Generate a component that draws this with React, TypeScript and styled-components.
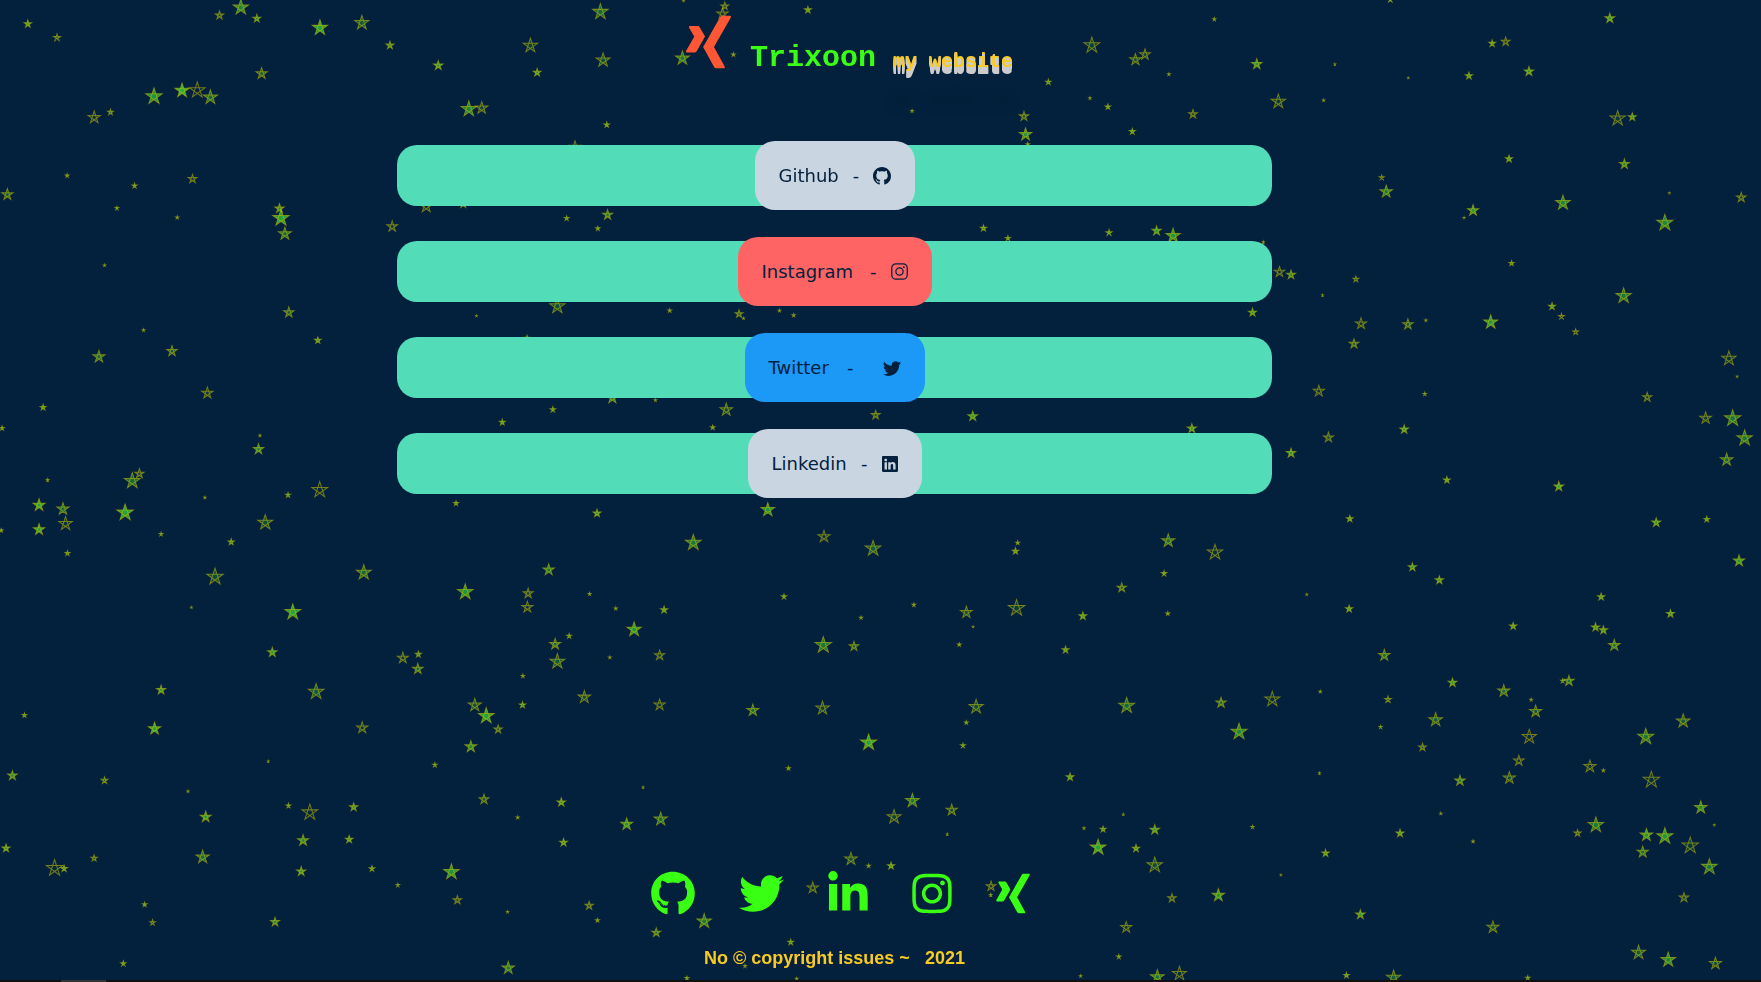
import React from "react";
import styled, { createGlobalStyle } from "styled-components";
import { BsGithub, BsTwitter, BsLinkedin } from "react-icons/bs";
import { FaGithub, FaTwitter, FaLinkedinIn, FaInstagram, FaXing } from "react-icons/fa";

const navy = "#03213d";
const neon = "#39ff14";
const gold = "#f9ca24";

const GlobalStyle = createGlobalStyle`
  *, *::before, *::after { box-sizing: border-box; }
  body { margin: 0; background: ${navy}; }
`;

const Sky = styled.svg`
  position: fixed;
  inset: 0;
  width: 100%;
  height: 100%;
  z-index: -1;
`;

const Star = styled.path`
  fill: #3cff3c;
  stroke: #c8be00;
  stroke-opacity: 0.58;
  stroke-width: 0.9;
`;

const Page = styled.div`
  min-height: 100vh;
  display: flex;
  flex-direction: column;
  align-items: center;
  padding: 12px 92px 14px 0;
`;

const Header = styled.header`
  display: flex;
  align-items: flex-end;
  height: 64px;
  padding-left: 30px;
`;

const Logo = styled(FaXing)`
  width: 45px;
  height: 60px;
  color: #ff5733;
  align-self: flex-start;
  margin-right: 19px;
`;

const Title = styled.h1`
  margin: 0 17px 0 0;
  font: bold 30px/36px "Liberation Mono", monospace;
  color: ${neon};
`;

const Subtitle = styled.span`
  font: bold 20px/28px "Liberation Mono", monospace;
  color: ${gold};
  text-shadow: 0 1px 0 #ccc, 0 2px 0 #ccc, 0 3px 0 #ccc, 0 4px 0 #ccc,
    0 5px 0 #ccc, 0 6px 0 #ccc, 0 7px 0 #ccc,
    0 40px 12px rgba(0, 0, 20, 0.15);
`;

const LinkList = styled.ul`
  list-style: none;
  width: 100%;
  max-width: 875px;
  margin: 69px 0 40px;
  padding: 0;
  display: flex;
  flex-direction: column;
  gap: 35px;
`;

const Bar = styled.li`
  height: 61px;
  display: flex;
  justify-content: center;
  align-items: center;
  background: #52dcb8;
  border-radius: 20px;
`;

const Pill = styled.a<{ $tone: string; $width: number }>`
  flex: none;
  display: flex;
  align-items: center;
  gap: 14px;
  width: ${(p) => p.$width}px;
  height: 69px;
  padding: 0 24px;
  border-radius: 20px;
  background: ${(p) => p.$tone};
  color: ${navy};
  font: 18px/21px "DejaVu Sans", sans-serif;
  text-decoration: none;
`;

const PillName = styled.span`
  flex: 1;
`;

const PillIcon = styled.span<{ $indent: number }>`
  display: flex;
  margin-left: ${(p) => p.$indent}px;
`;

const Footer = styled.footer`
  margin-top: auto;
  display: flex;
  flex-direction: column;
  align-items: center;
  gap: 32px;
`;

const Socials = styled.nav`
  display: flex;
  gap: 44px;
  padding-left: 12px;
`;

const Social = styled.a<{ $width: number }>`
  display: flex;
  color: ${neon};

  svg {
    width: ${(p) => p.$width}px;
    height: 45px;
  }
`;

const Copyright = styled.p`
  margin: 0;
  font: bold 18px/20px "Liberation Sans", sans-serif;
  color: ${gold};
  white-space: pre;
`;

const Strip = styled.div`
  position: fixed;
  inset: auto 0 0 0;
  height: 2px;
  background: #111;
  padding-left: 61px;
`;

const StripThumb = styled.div`
  width: 45px;
  height: 2px;
  background: #333;
`;

/* x, y, radius and how strongly the star is filled */
type StarSpec = [number, number, number, number?];

const stars: StarSpec[] = [
  [24.7, 21.2, 3.8, 0.8], [50.7, 33.4, 3.6, 0.3], [195.3, 13.6, 4.2, 0.2], [214.3, 6.5, 7.5, 0.7],
  [228.5, 16.4, 4, 0.7], [284.7, 24.7, 7.5, 0.9], [322, 20.3, 7, 0.4], [347, 40.2, 4, 0.7],
  [390, 58.2, 4.7, 0.8], [472, 40.5, 7, 0.2], [478, 64.5, 4, 0.8], [232.8, 65.4, 5.6, 0.4],
  [137, 85.8, 8, 0.8], [162, 80.5, 7, 1], [175.5, 80.2, 7.6, 0], [187.2, 86.5, 7, 0.5],
  [83.8, 104.4, 6, 0.1], [98.3, 99.8, 3, 0.6], [417.2, 97, 7.5, 0.7], [428.7, 96, 6, 0.2],
  [511.7, 131, 6, 0.1], [59.7, 156.2, 2], [119.7, 165.3, 2.6], [171.3, 159.2, 4.4, 0.1],
  [6.5, 173, 5.6, 0.4], [104, 185.2, 2], [157.7, 193.5, 1.7], [248.7, 185.5, 4.7, 0.7],
  [250, 194, 8, 0.9], [253.5, 208, 6.3, 0.5], [379.3, 183.5, 6.3, 0.1], [412.3, 181.5, 4],
  [349, 201.5, 5.3, 0.1], [504.3, 194.2, 2.5], [93, 236, 1.3], [127.7, 293.7, 1.5],
  [257, 278, 5.2, 0.4], [282.8, 302.8, 3.4], [88, 317.5, 6, 0.5], [153, 312.5, 5.2, 0.4],
  [184.5, 349.7, 5.6, 0.15], [496, 272.5, 7.4, 0.3], [424, 281, 0.7], [469, 301, 3],
  [38.3, 362.5, 3.1], [1.8, 381, 2.4], [492, 364.5, 2.9], [447, 375.8, 3.1],
  [231.3, 387.5, 1.2], [230, 399.7, 5.2, 0.7], [42.3, 427, 1.5], [117.7, 428, 7.7, 0.5],
  [124, 421.5, 4.7, 0.2], [34.7, 449.5, 6, 0.9], [56, 453, 6, 0.5], [58.3, 466, 6.6, 0.1],
  [34.7, 471.2, 5.6, 0.9], [111.3, 456.2, 8, 0.9], [60, 492.3, 2.6], [1, 472, 2],
  [143.3, 475.3, 2], [182.3, 442.7, 1.3], [256.3, 440.5, 2.6], [284.5, 436, 7.7, 0.05],
  [236, 465, 7.3, 0.3], [205.7, 482.3, 3.2], [191.3, 513.3, 8, 0.3], [170.3, 540.5, 1],
  [323.7, 509.5, 7.3, 0.5], [260.5, 544.7, 7.7, 0.9], [414, 526.9, 7.6, 0.8], [405.8, 447.9, 2.6],
  [488.3, 507, 5.6, 0.6], [470, 528, 5, 0.2], [469.3, 540.4, 5.5, 0.1], [242.3, 580.5, 4.7, 0.8],
  [143.3, 614, 4.6, 0.8], [281.3, 615.7, 7.6, 0.4], [21.7, 636.5, 2.4], [137.5, 648.5, 6.1, 0.9],
  [322.3, 647.7, 5.6, 0.1], [358.5, 585.5, 5.4, 0.15], [372.3, 582.3, 3.2, 0.7], [371.8, 595.3, 5.3, 0.5],
  [465.3, 601.5, 1.9], [465, 627.3, 3.3], [494, 573.3, 5.5, 0.5], [496, 588.7, 7.3, 0.4],
  [506.5, 566, 2.6], [422.5, 627.5, 6.4, 0.3], [432.7, 637.2, 7.7, 0.9], [443.3, 649, 4.2, 0.3],
  [419, 664.5, 5.8, 0.7], [387, 680.7, 2.4], [11, 690.2, 4.8, 0.7], [93, 694.5, 3.5, 0.4],
  [238.7, 677.3, 0.9], [167.3, 704.3, 1.2], [256.7, 717, 2.5], [275.7, 723, 7.7, 0.05],
  [314.7, 718.3, 4.2], [183, 727, 5.4, 0.8], [269.7, 748, 5.5, 0.7], [310.7, 747, 3.9],
  [180.3, 762.7, 6.5, 0.5], [268, 775.5, 4.6, 0.8], [331, 773, 3], [5.3, 754.9, 4.1],
  [48.5, 772.6, 8, 0.05], [57, 773, 3.5], [83.7, 763.7, 3.2, 0.3], [354, 787.7, 1.9],
  [401.7, 776, 7.6, 0.8], [407, 801, 4.3, 0.2], [430.7, 711.4, 4.9, 0.3], [460.7, 727.5, 1.6],
  [499.5, 714, 4.3, 0.8], [501.5, 749.7, 4], [128.7, 805, 2.4], [135.7, 821, 2.9, 0.3],
  [244.7, 820.5, 4.5, 0.7], [109.7, 857.5, 2.8], [451.7, 811.5, 1.2], [452.3, 861.4, 6.2, 0.6],
  [520, 620.4, 6.2, 0.3], [534.3, 10.5, 7.6, 0.5], [536.7, 53.5, 6.8, 0.3], [540, 111, 2.9],
  [540.7, 191.2, 5, 0.6], [532, 203.3, 2.3], [719, 8.8, 3.6], [608.3, 0.5, 1],
  [645, 5.4, 4, 0.2], [643, 12.2, 5.6, 0.1], [607.3, 51.7, 6.8, 0.6], [652.7, 48.5, 2],
  [811.7, 98.7, 1.6], [971.7, 40.3, 7.7, 0.2], [1010.5, 53, 5.7, 0.3], [1019, 48.5, 5.3, 0.2],
  [1040.3, 66, 1.6], [933, 73, 2.9], [970, 87.3, 1.4], [986, 95, 2.9],
  [911.3, 103.5, 4.7, 0.3], [912.7, 119.7, 6.2, 0.8], [914.7, 128.3, 2], [1007.7, 117, 3.2],
  [875.3, 203, 3.3], [897, 212, 2.7], [987, 207, 3.2], [1029.3, 205.4, 4.7],
  [1044, 209.7, 7, 0.8], [596, 276.3, 2], [657.7, 279.3, 4, 0.3], [661.7, 283.2, 1.2],
  [693.7, 276.3, 1.5], [706.3, 280.6, 1.8], [545, 354, 5.7, 0.6], [583.3, 356, 1.4],
  [646.3, 364.7, 6.2, 0.3], [634.3, 380.3, 2.4], [779.3, 369.3, 4.5, 0.3], [865.7, 370.4, 4.9, 0.8],
  [531.3, 456.7, 4], [683.3, 453.6, 6.7, 0.8], [617, 483, 7.7, 0.6], [733.3, 477.5, 5.9, 0.1],
  [777, 488.2, 7.6, 0.4], [905.7, 483, 2.1], [903.7, 490.5, 3.4], [1039.7, 481.3, 6.5, 0.5],
  [1036, 510.3, 2.9], [998.3, 523, 4.7, 0.4], [524.7, 528.5, 1.7], [548, 541.5, 1.7],
  [591, 542.7, 3.7], [564.3, 560.2, 7, 0.8], [697.7, 531, 2.8], [766.3, 549.7, 1.7],
  [813.3, 538.3, 2], [860, 545, 5.8, 0.3], [904.7, 541.2, 8, 0.2], [866, 557.7, 0.8],
  [963.7, 548.2, 4], [1039.3, 546, 2.1], [948.3, 578.3, 3.6], [732.7, 574.2, 8, 0.6],
  [760, 575.2, 4.8, 0.4], [853.7, 573.7, 2], [542.7, 585, 1.5], [587, 583.3, 5, 0.15],
  [587, 627.3, 5.5, 0.1], [670, 632.2, 5.9, 0.5], [732, 630.3, 6.6, 0.2], [868.7, 629, 7, 0.3],
  [860, 643, 2.1], [857, 663.5, 2.6], [773, 660.8, 7.9, 0.9], [1002.7, 628, 7.7, 0.5],
  [701.7, 683.7, 2.1], [952.3, 691.5, 4], [812, 712.5, 6.8, 0.6], [795.7, 727, 6.8, 0.2],
  [847, 721, 5.6, 0.3], [843, 742.3, 0.8], [572.3, 700.5, 0.8], [557.7, 733.5, 5.9, 0.8],
  [588, 729, 6.5, 0.5], [964.7, 737, 1.3], [981.7, 738, 3.1], [977.3, 754.2, 7.7, 0.9],
  [999.7, 724.7, 0.9], [1011, 755, 3.8], [1027.7, 738.4, 4.8], [1027.7, 770, 7.5, 0.3],
  [757.3, 764.5, 6.2, 0.3], [773, 770.6, 2], [793, 770.6, 3.7], [723.3, 790.2, 5.6, 0.1],
  [882, 788.7, 4.9, 0.1], [881.7, 796.3, 1.5], [626.7, 819.9, 7.1, 0.6], [584, 830, 4.5, 0.5],
  [531.7, 819, 2.1], [524.3, 806, 4.2, 0.3], [703.7, 838.5, 3], [663, 859.7, 1.7],
  [611.3, 870.5, 2.2], [709, 871, 1.4], [1002.3, 825.3, 5.5, 0.15], [995.7, 851.4, 2.4],
  [961.7, 868.6, 1.4], [1030, 869.4, 6.8, 0.6], [1043, 799.3, 4.3, 0.2], [1080.7, 17, 1.8],
  [1237.3, -0.5, 3], [1118.5, 57, 5.2, 0.8], [1137.7, 90.3, 7, 0.2], [1188, 57, 0.6],
  [1253.3, 69.3, 0.8], [1178, 89.2, 1.3], [1061.7, 101.5, 4.4, 0.2], [1328, 38.6, 3.5],
  [1340, 37, 4.4, 0.1], [1307.3, 67.5, 3.7], [1360.7, 63.5, 4.7, 0.8], [1432.7, 16.2, 4.9, 0.8],
  [1439.7, 105.4, 7.4, 0.15], [1452.7, 104, 4, 0.7], [1343, 141.3, 3.7], [1445.7, 146, 4.9, 0.7],
  [1485.7, 171.7, 0.7], [1229.7, 158, 2.6, 0.3], [1233.7, 170.5, 6.2, 0.6], [1311, 187.2, 5.5, 0.8],
  [1303, 193.7, 1.1], [1391, 180.5, 7.2, 0.7], [1481.7, 198.3, 7.9, 0.7], [1549.7, 175.7, 4.8, 0.2],
  [1124.3, 215.3, 1.2], [1138.7, 242, 5.2, 0.1], [1149, 244.5, 4.5, 0.7], [1206.7, 248.4, 3, 0.3],
  [1177, 262.7, 1], [1345.3, 234.2, 2.7], [1445, 263.3, 7.5, 0.6], [1381.3, 272.6, 3.6],
  [1389.7, 281.5, 3, 0.3], [1402.3, 295.3, 3, 0.3], [1114.7, 278, 4.1], [1205, 306, 4.8, 0.4],
  [1211.3, 288, 5.5, 0.1], [1253, 288.7, 5.2, 0.4], [1269, 285, 1.3], [1326.7, 286.7, 6.9, 0.8],
  [1538.7, 319, 7, 0.1], [1546, 335, 0.8], [1173.7, 348, 5.5, 0.1], [1268, 350.6, 1.9],
  [1466, 353.5, 4.6, 0.2], [1518, 372, 5.8, 0.15], [1542, 372.3, 8, 0.6], [1552.7, 389.9, 7.6, 0.6],
  [1536.7, 409.2, 6.2, 0.5], [1060.7, 381.3, 4.6], [1182.3, 389.3, 5, 0.2], [1249.7, 382.1, 4.4],
  [1149, 403.2, 4.7, 0.8], [1287.7, 427.2, 3.5], [1387.3, 432.9, 4.8, 0.9], [1201.3, 461.7, 3.5],
  [1474, 465, 4.5], [1519, 462.1, 3], [1081.3, 491.6, 7.5, 0.1], [1257, 504.7, 4.2, 0.8],
  [1281, 516.3, 4.2, 0.8], [1547.7, 499.1, 5.6, 0.8], [1163, 529, 1], [1200.7, 541.8, 3.7],
  [1425, 531.2, 3.7], [1346.7, 557.2, 3.7, 0.8], [1420, 558.2, 4.2], [1427, 560.8, 4.2],
  [1486.7, 546.1, 4], [1436.7, 574.3, 5.7, 0.6], [1232, 583.2, 5.6, 0.5], [1292.7, 607.6, 4.4],
  [1338.3, 615, 6, 0.5], [1396.3, 606, 5.2, 0.6], [1390.7, 606, 2.2], [1362.7, 622.7, 1.5],
  [1366.7, 633.2, 6, 0.4], [1086.7, 625.4, 5.2, 0.5], [1132.3, 622.3, 7.3, 0.1], [1175, 615.5, 1.5],
  [1102.7, 651.2, 7.9, 0.7], [1235.3, 622.5, 3.5, 0.3], [1228.7, 647, 1.8], [1277.7, 640.6, 6.7, 0.4],
  [1266, 665, 3.9, 0.3], [1361, 655.7, 7, 0.05], [1351.7, 677, 5.2, 0.1], [1343.3, 692.4, 6, 0.3],
  [1299.3, 694.7, 5.2, 0.6], [1415, 682.1, 6, 0.1], [1427, 685.6, 1.6], [1464.7, 655.7, 7.9, 0.6],
  [1498, 641.7, 6.7, 0.4], [1469.7, 694.1, 7.9, 0.1], [1174.3, 688, 1.1], [1282.3, 724, 1.3],
  [1311, 748.7, 1.5], [1246, 741.5, 4], [1114.7, 736, 1.8], [1179.7, 759.3, 3.7],
  [1140, 778.7, 0.8], [1084.3, 796.8, 6.2, 0.8], [1210.7, 813.9, 4.7], [1404, 741.5, 3.6, 0.3],
  [1420.3, 734.2, 7.5, 0.6], [1465.3, 743.2, 6.2, 0.8], [1481.7, 744.2, 7.9, 0.8], [1462, 758.2, 5.6, 0.5],
  [1504.3, 752.6, 7.9, 0.15], [1513.7, 718.7, 6.2, 0.7], [1525.7, 734.2, 0.6], [1521.3, 771.5, 7.7, 0.6],
  [1498.7, 798.8, 4.8, 0.2], [1328.7, 825.2, 6, 0.3], [1049.7, 866.6, 6.9, 0.1], [1198.3, 868, 2.9],
  [1240.3, 870, 7, 0.4], [1359.7, 870.3, 2.4], [1458.3, 847.7, 6.9, 0.4], [1484.7, 854.2, 7.2, 0.7],
  [1526.7, 857.5, 6, 0.3],
];

/* One unbroken five-line stroke, so the inner pentagon stays visible */
const starPath = (x: number, y: number, size: number) => {
  const r = Math.max(size - 0.3, 0.6);
  const points = [0, 2, 4, 1, 3].map((i) => {
    const a = -Math.PI / 2 + (i * 2 * Math.PI) / 5;
    return `${(x + r * Math.cos(a)).toFixed(2)} ${(y + r * Math.sin(a)).toFixed(2)}`;
  });
  return `M${points.join("L")}Z`;
};

const InstagramOutline = () => (
  <svg width="17" height="17" viewBox="1 1 22 22" fill="none" stroke="currentColor" strokeWidth="1.6" aria-hidden="true">
    <rect x="2" y="2" width="20" height="20" rx="5.5" />
    <circle cx="12" cy="12" r="4.7" />
    <circle cx="17.6" cy="6.4" r="1.2" fill="currentColor" stroke="none" />
  </svg>
);

const links = [
  { name: "Github", tone: "#cad5e2", width: 160, indent: 0, icon: <BsGithub size={18} /> },
  { name: "Instagram", tone: "#ff6464", width: 194, indent: 0, icon: <InstagramOutline /> },
  { name: "Twitter", tone: "#1c98f7", width: 180, indent: 15, icon: <BsTwitter size={18} /> },
  { name: "Linkedin", tone: "#cad5e2", width: 174, indent: 0, icon: <BsLinkedin size={16} /> },
];

const socials = [
  { name: "Github", width: 44, icon: <FaGithub /> },
  { name: "Twitter", width: 45, icon: <FaTwitter /> },
  { name: "Linkedin", width: 40, icon: <FaLinkedinIn /> },
  { name: "Instagram", width: 40, icon: <FaInstagram /> },
  { name: "Xing", width: 34, icon: <FaXing /> },
];

export default function App() {
  return (
    <>
      <GlobalStyle />
      <Sky viewBox="-0.4 -0.1 1568 874" preserveAspectRatio="xMidYMid slice" aria-hidden="true">
        {stars.map(([x, y, r, fill = 0.8], i) => (
          <Star key={i} d={starPath(x, y, r)} fillOpacity={fill * 0.65} />
        ))}
      </Sky>
      <Page>
        <Header>
          <Logo aria-hidden="true" />
          <Title>Trixoon</Title>
          <Subtitle>my website</Subtitle>
        </Header>
        <LinkList>
          {links.map((l) => (
            <Bar key={l.name}>
              <Pill href="#" $tone={l.tone} $width={l.width}>
                <PillName>{l.name}</PillName>
                <span>-</span>
                <PillIcon $indent={l.indent}>{l.icon}</PillIcon>
              </Pill>
            </Bar>
          ))}
        </LinkList>
        <Footer>
          <Socials>
            {socials.map((s) => (
              <Social key={s.name} href="#" aria-label={s.name} $width={s.width}>
                {s.icon}
              </Social>
            ))}
          </Socials>
          <Copyright>{"No © copyright issues ~\u00a0\u00a0 2021"}</Copyright>
        </Footer>
      </Page>
      <Strip>
        <StripThumb />
      </Strip>
    </>
  );
}
